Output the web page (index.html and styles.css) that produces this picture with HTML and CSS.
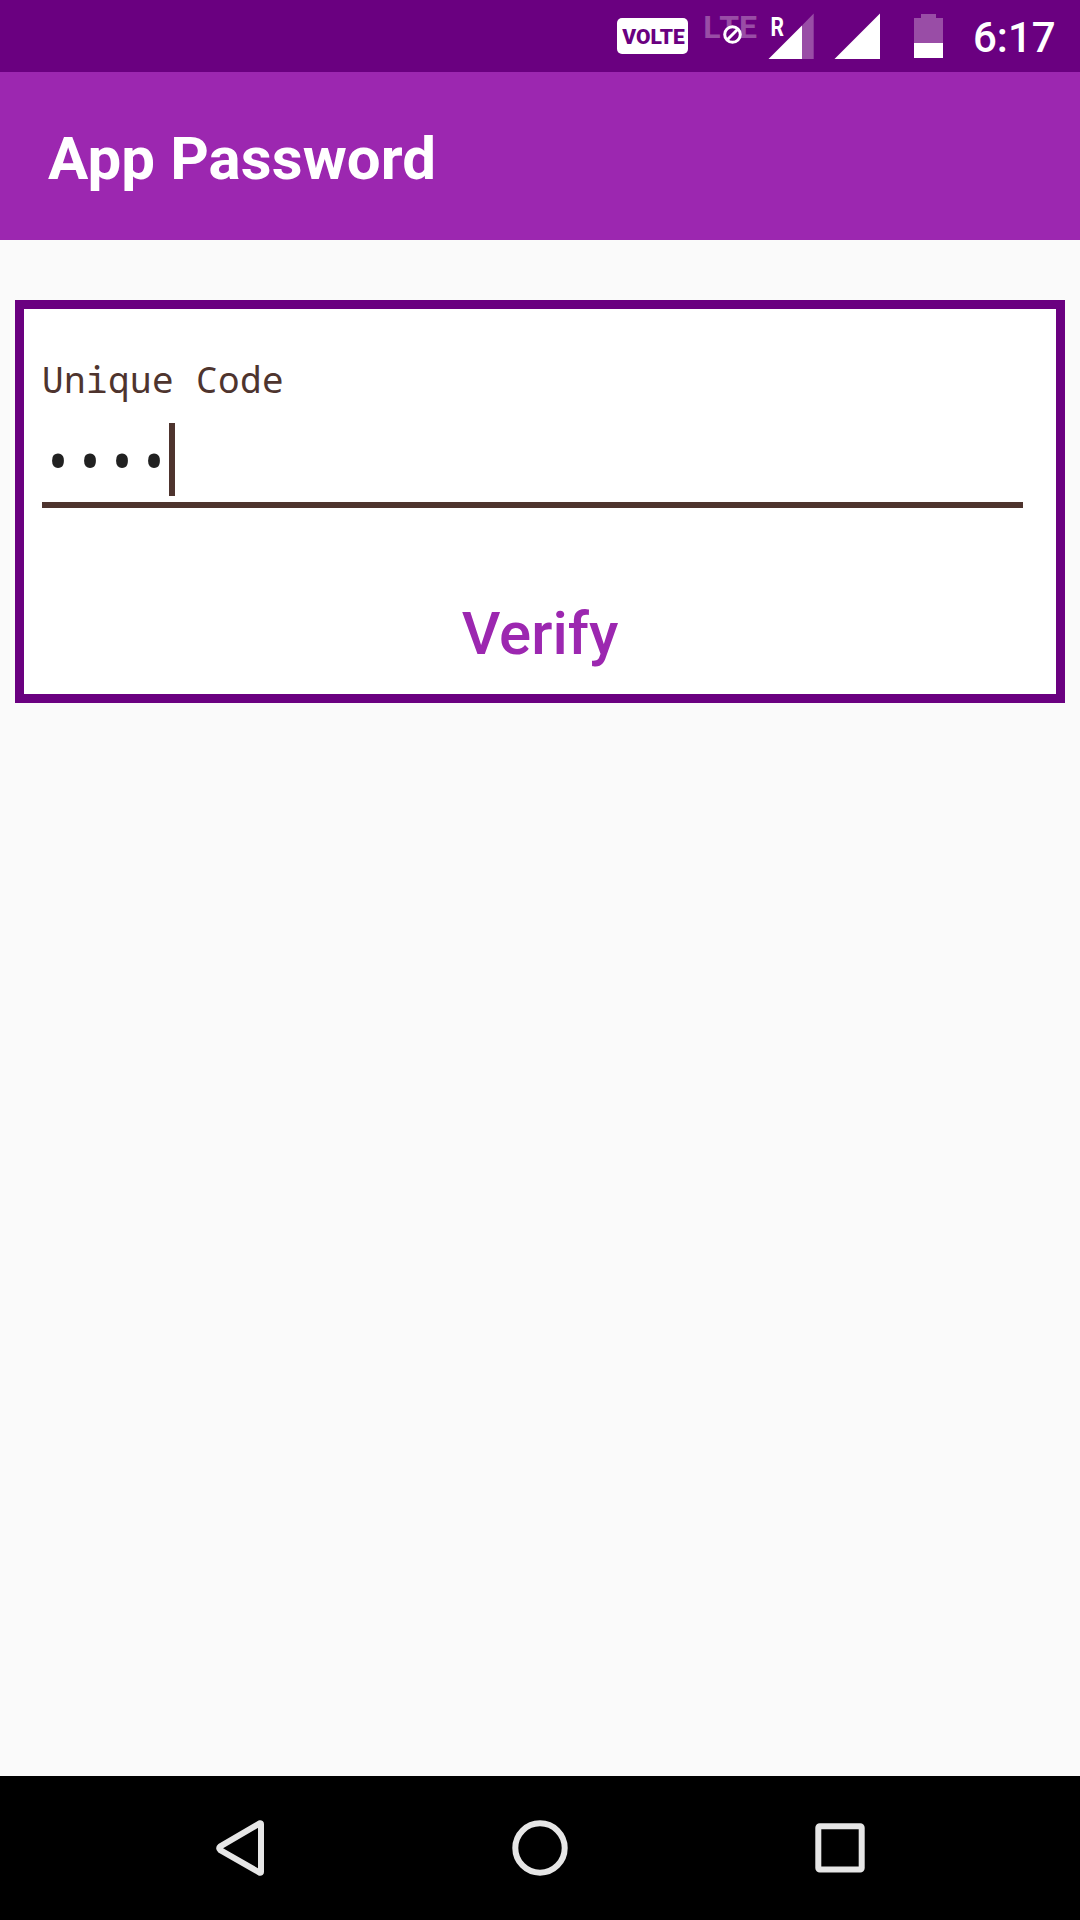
FILE: index.html
```html
<!DOCTYPE html>
<html lang="en">
<head>
<meta charset="utf-8">
<title>App Password</title>
<link rel="stylesheet" href="styles.css">
</head>
<body>
<div class="status-bar">
  <span class="volte">VOLTE</span>
  <svg class="lte" width="54" height="72" viewBox="704 0 54 72">
    <text class="lte-text" y="38"><tspan x="703.3">L</tspan><tspan x="719.3">T</tspan><tspan x="739">E</tspan></text>
    <circle class="lte-badge" cx="732.5" cy="34.5" r="7.8"/>
    <path class="lte-slash" d="M727.3 39.7 737.7 29.3"/>
  </svg>
  <svg class="roaming" width="46" height="72" viewBox="768 0 46 72">
    <path class="dim" d="M802 25.5 813.7 13.5V59H802Z"/>
    <path class="solid" d="M768.5 59 802 25.5V59Z"/>
    <text class="roaming-text" x="770.6" y="36" textLength="13.5" lengthAdjust="spacingAndGlyphs">R</text>
  </svg>
  <svg class="signal" width="46" height="72" viewBox="834 0 46 72">
    <path class="solid" d="M834.5 59 880 13.5V59Z"/>
  </svg>
  <svg class="battery" width="29" height="72" viewBox="914 0 29 72">
    <path class="dim" d="M921 14H936V18H943V43H914V18H921Z"/>
    <path class="solid" d="M914 43H943V58H914Z"/>
  </svg>
  <span class="clock">6:17</span>
</div>
<header class="app-bar"><h1 class="title">App Password</h1></header>
<main class="content">
  <section class="card">
    <div class="label">Unique Code</div>
    <div class="field"><span class="mask">••••</span><span class="cursor"></span></div>
    <button class="verify" type="button">Verify</button>
  </section>
</main>
<nav class="nav-bar">
  <svg width="72" height="72" viewBox="204 1812 72 72"><path class="nav-icon" d="M260 1823.2 220.3 1846.3Q218 1848.2 220.3 1850.1L260 1872.8Q261 1873 261 1872V1824Q261 1823 260 1823.2Z"/></svg>
  <svg width="72" height="72" viewBox="504 1812 72 72"><circle class="nav-icon" cx="540" cy="1848" r="24.7"/></svg>
  <svg width="72" height="72" viewBox="804 1812 72 72"><rect class="nav-icon" x="818.3" y="1826.2" width="43.4" height="43.4" rx="1.5"/></svg>
</nav>
</body>
</html>
```
FILE: styles.css
```css
* { box-sizing: border-box; }
body {
  margin: 0;
  width: 1080px;
  height: 1920px;
  display: flex;
  flex-direction: column;
  background: #fafafa;
  font-family: Roboto, sans-serif;
  overflow: hidden;
}
.status-bar {
  height: 72px;
  padding-left: 617px;
  display: flex;
  align-items: center;
  background: #6a0080;
  color: #fff;
}
.status-bar svg { flex: none; }
.volte {
  width: 71px;
  height: 36px;
  padding-left: 2px;
  border-radius: 5px;
  background: #fff;
  color: #6a0080;
  font-size: 21px;
  font-weight: 900;
  line-height: 38px;
  text-align: center;
}
.lte { margin-left: 16px; }
.lte-text { font-size: 32px; font-weight: 700; fill: #994da6; }
.lte-badge { fill: #6a0080; stroke: #fff; stroke-width: 3; }
.lte-slash { stroke: #fff; stroke-width: 3; }
.roaming { margin-left: 10px; }
.roaming-text { font-size: 25px; font-weight: 700; fill: #fff; }
.signal { margin-left: 20px; }
.battery { margin-left: 34px; }
.solid { fill: #fff; }
.dim { fill: #994da6; }
.clock {
  margin-left: 30px;
  padding-top: 4px;
  font-size: 42px;
  font-weight: 500;
  line-height: 50px;
}
.app-bar {
  height: 168px;
  padding: 6px 48px 0;
  display: flex;
  align-items: center;
  background: #9c27b0;
}
.title {
  margin: 0;
  font-size: 60px;
  font-weight: 700;
  line-height: 72px;
  letter-spacing: 0.1px;
  color: #fff;
}
.content { flex: 1; padding: 60px 15px 0; }
.card {
  height: 403px;
  padding: 46px 18px 0;
  border: 9px solid #6a0080;
  background: #fff;
}
.label {
  height: 50px;
  font-family: "Noto Sans Mono", "Droid Sans Mono", "DejaVu Sans Mono", monospace;
  font-size: 36px;
  line-height: 50px;
  letter-spacing: 0.4px;
  color: #4e342e;
}
.field {
  width: 981px;
  height: 103px;
  padding-top: 18px;
  display: flex;
  align-items: flex-start;
  border-bottom: 6px solid #4e342e;
}
.mask {
  width: 127px;
  font-family: "Noto Sans Mono", "Droid Sans Mono", "DejaVu Sans Mono", monospace;
  font-size: 53.3px;
  line-height: 73px;
  color: #212121;
  transform: scaleY(1.08);
}
.cursor { width: 6px; height: 73px; background: #4e342e; }
.verify {
  display: block;
  width: 100%;
  height: 120px;
  margin: 66px 0 0;
  padding: 0;
  border: 0;
  background: none;
  font: 500 60px/120px Roboto, sans-serif;
  color: #9c27b0;
}
.nav-bar {
  height: 144px;
  padding: 0 90px;
  display: grid;
  grid-template-columns: repeat(3, 300px);
  place-items: center;
  background: #000;
}
.nav-icon { fill: none; stroke: #e6e6e6; stroke-width: 6; stroke-linejoin: round; }
```
